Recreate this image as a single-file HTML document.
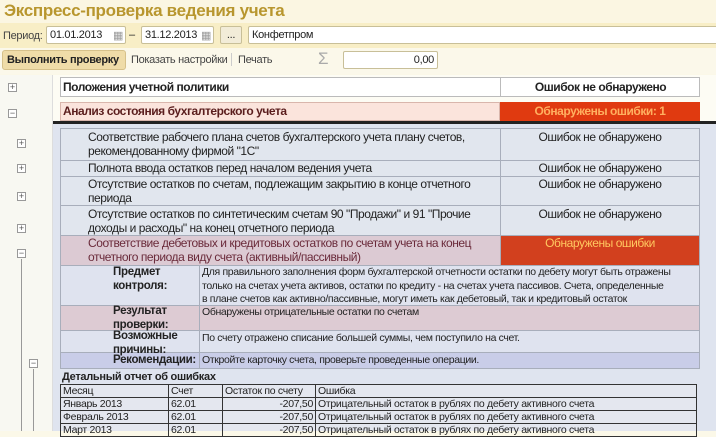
<!DOCTYPE html>
<html><head><meta charset="utf-8"><style>
*{margin:0;padding:0;box-sizing:border-box}
body{width:716px;height:431px;overflow:hidden;background:#fbf8e8;font-family:"Liberation Sans",Arial,sans-serif;position:relative;color:#222}
.a{position:absolute;white-space:nowrap}
.inp{position:absolute;background:#fff;border:1px solid #c8bf98;border-radius:2px;font-size:11px;padding:2px 3px;height:18px;white-space:nowrap;letter-spacing:-0.3px}
.t{font-size:12px;line-height:14px;letter-spacing:-0.45px}
.pl{position:absolute;width:9px;height:9px;border:1px solid #999;background:#fff;font-size:9px;line-height:7px;text-align:center;color:#555}
.box{position:absolute;border:1px solid #a8aebb}
.s{font-size:10.5px;line-height:13.5px;letter-spacing:-0.35px}
.lb{font-size:11.5px;line-height:13.5px;font-weight:bold;letter-spacing:-0.3px}
.c{position:absolute;border:1px solid #333;font-size:10.5px;line-height:12px;padding-left:2px;letter-spacing:-0.3px;white-space:nowrap;height:14px}
</style></head><body>
<div class="a" style="left:0;top:0;width:716px;height:23px;background:#fbf6e2"></div>
<div class="a" style="left:4px;top:1px;font-size:17px;font-weight:bold;color:#b8962e;letter-spacing:-0.3px">Экспресс-проверка ведения учета</div>
<div class="a" style="left:0;top:23px;width:716px;height:25px;background:#f8eec6"></div>
<div class="a" style="left:3px;top:30px;font-size:11px;color:#444;letter-spacing:-0.3px">Период:</div>
<div class="inp" style="left:46px;top:26px;width:80px">01.01.2013<span class="a" style="left:66px;top:2px;color:#999">▦</span></div>
<div class="a" style="left:129px;top:29px;font-size:11px">–</div>
<div class="inp" style="left:141px;top:26px;width:73px">31.12.2013<span class="a" style="left:59px;top:2px;color:#999">▦</span></div>
<div class="inp" style="left:220px;top:26px;width:22px;background:#f2ecd8;text-align:center;padding:2px 0">...</div>
<div class="inp" style="left:248px;top:26px;width:470px">Конфетпром</div>
<div class="a" style="left:0;top:48px;width:716px;height:26px;background:#fbf8ea"></div>
<div class="a" style="left:2px;top:50px;width:124px;height:20px;background:#efdca8;border:1px solid #d6c18a;border-radius:3px;font-size:11px;font-weight:bold;padding:3px 4px;letter-spacing:-0.3px">Выполнить проверку</div>
<div class="a" style="left:131px;top:54px;font-size:11px;color:#444;letter-spacing:-0.3px">Показать настройки</div>
<div class="a" style="left:231px;top:53px;width:1px;height:13px;background:#ccc"></div>
<div class="a" style="left:238px;top:54px;font-size:11px;color:#444;letter-spacing:-0.3px">Печать</div>
<div class="a" style="left:318px;top:49px;font-size:17px;color:#aaa">Σ</div>
<div class="inp" style="left:343px;top:51px;width:95px;text-align:right">0,00</div>
<div class="a" style="left:0;top:75px;width:53px;height:356px;background:#f8f8f2;border-right:1px solid #ddd"></div>
<div class="pl" style="left:8px;top:83px">+</div>
<div class="pl" style="left:8px;top:109px">−</div>
<div class="a" style="left:53px;top:75px;width:663px;height:46px;background:#fdfcf4"></div>
<div class="a" style="left:60px;top:77px;width:640px;height:20px;background:#fff;border:1px solid #bbb"></div>
<div class="a t" style="left:63px;top:80px;font-weight:bold">Положения учетной политики</div>
<div class="a t" style="left:500px;top:78px;height:18px;padding-top:2px;width:200px;text-align:center;font-weight:bold;border-left:1px solid #bbb">Ошибок не обнаружено</div>
<div class="a" style="left:60px;top:102px;width:440px;height:19px;background:#fbe4dc;border:1px solid #d9b6ac"></div>
<div class="a t" style="left:63px;top:104px;font-weight:bold;color:#5a1d1d">Анализ состояния бухгалтерского учета</div>
<div class="a t" style="left:500px;top:102px;width:200px;height:19px;background:#e03a10;color:#ffb060;font-weight:bold;text-align:center;padding-top:2px">Обнаружены ошибки: 1</div>
<div class="a" style="left:53px;top:121px;width:663px;height:3px;background:#222"></div>
<div class="a" style="left:53px;top:124px;width:663px;height:307px;background:#dfe4ef"></div>
<div class="pl" style="left:17px;top:139px">+</div>
<div class="pl" style="left:17px;top:164px">+</div>
<div class="pl" style="left:17px;top:192px">+</div>
<div class="pl" style="left:17px;top:224px">+</div>
<div class="pl" style="left:17px;top:249px">−</div>
<div class="a" style="left:21px;top:259px;width:1px;height:172px;background:#999"></div>
<div class="pl" style="left:29px;top:359px">−</div>
<div class="a" style="left:33px;top:369px;width:1px;height:62px;background:#999"></div>

<div class="box" style="left:60px;top:128px;width:441px;height:33px;background:#e1e6ee"></div>
<div class="box" style="left:500px;top:128px;width:200px;height:33px;background:#e1e6ee"></div>
<div class="box" style="left:60px;top:160px;width:441px;height:17px;background:#e1e6ee"></div>
<div class="box" style="left:500px;top:160px;width:200px;height:17px;background:#e1e6ee"></div>
<div class="box" style="left:60px;top:176px;width:441px;height:30px;background:#e1e6ee"></div>
<div class="box" style="left:500px;top:176px;width:200px;height:30px;background:#e1e6ee"></div>
<div class="box" style="left:60px;top:205px;width:441px;height:31px;background:#e1e6ee"></div>
<div class="box" style="left:500px;top:205px;width:200px;height:31px;background:#e1e6ee"></div>
<div class="box" style="left:60px;top:235px;width:441px;height:31px;background:#dccad3"></div>
<div class="box" style="left:500px;top:235px;width:200px;height:31px;background:#d2401e"></div>

<div class="a t" style="left:88px;top:130px">Соответствие рабочего плана счетов бухгалтерского учета плану счетов,<br>рекомендованному фирмой "1С"</div>
<div class="a t" style="left:88px;top:161px">Полнота ввода остатков перед началом ведения учета</div>
<div class="a t" style="left:88px;top:177px">Отсутствие остатков по счетам, подлежащим закрытию в конце отчетного<br>периода</div>
<div class="a t" style="left:88px;top:207px">Отсутствие остатков по синтетическим счетам 90 "Продажи" и 91 "Прочие<br>доходы и расходы" на конец отчетного периода</div>
<div class="a t" style="left:88px;top:236px;color:#6a2a3a">Соответствие дебетовых и кредитовых остатков по счетам учета на конец<br>отчетного периода виду счета (активный/пассивный)</div>
<div class="a t" style="left:500px;top:130px;width:200px;text-align:center">Ошибок не обнаружено</div>
<div class="a t" style="left:500px;top:161px;width:200px;text-align:center">Ошибок не обнаружено</div>
<div class="a t" style="left:500px;top:177px;width:200px;text-align:center">Ошибок не обнаружено</div>
<div class="a t" style="left:500px;top:207px;width:200px;text-align:center">Ошибок не обнаружено</div>
<div class="a t" style="left:500px;top:236px;width:200px;text-align:center;color:#ffc860">Обнаружены ошибки</div>

<div class="box" style="left:60px;top:265px;width:140px;height:41px;background:#dfe3ef"></div>
<div class="box" style="left:199px;top:265px;width:501px;height:41px;background:#dfe3ef"></div>
<div class="box" style="left:60px;top:305px;width:140px;height:26px;background:#ddcbd3"></div>
<div class="box" style="left:199px;top:305px;width:501px;height:26px;background:#ddcbd3"></div>
<div class="box" style="left:60px;top:330px;width:140px;height:23px;background:#dfe3ef"></div>
<div class="box" style="left:199px;top:330px;width:501px;height:23px;background:#dfe3ef"></div>
<div class="box" style="left:60px;top:352px;width:140px;height:17px;background:#c9cde8"></div>
<div class="box" style="left:199px;top:352px;width:501px;height:17px;background:#c9cde8"></div>
<div class="a lb" style="left:113px;top:266px">Предмет<br>контроля:</div>
<div class="a lb" style="left:113px;top:305px">Результат<br>проверки:</div>
<div class="a lb" style="left:113px;top:330px">Возможные<br>причины:</div>
<div class="a lb" style="left:113px;top:354px">Рекомендации:</div>
<div class="a s" style="left:202px;top:266px">Для правильного заполнения форм бухгалтерской отчетности остатки по дебету могут быть отражены<br>только на счетах учета активов, остатки по кредиту - на счетах учета пассивов. Счета, определенные<br>в плане счетов как активно/пассивные, могут иметь как дебетовый, так и кредитовый остаток</div>
<div class="a s" style="left:202px;top:306px">Обнаружены отрицательные остатки по счетам</div>
<div class="a s" style="left:202px;top:332px">По счету отражено списание большей суммы, чем поступило на счет.</div>
<div class="a s" style="left:202px;top:354px">Откройте карточку счета, проверьте проведенные операции.</div>

<div class="a" style="left:62px;top:371px;font-size:11px;font-weight:bold;letter-spacing:-0.3px">Детальный отчет об ошибках</div>
<div class="a" style="left:60px;top:384px;width:637px;height:47px;background:#e4e7ef"></div>
<div class="c" style="left:60px;top:384px;width:109px">Месяц</div>
<div class="c" style="left:168px;top:384px;width:55px">Счет</div>
<div class="c" style="left:222px;top:384px;width:94px">Остаток по счету</div>
<div class="c" style="left:315px;top:384px;width:382px">Ошибка</div>
<div class="c" style="left:60px;top:397px;width:109px">Январь 2013</div>
<div class="c" style="left:168px;top:397px;width:55px">62.01</div>
<div class="c" style="left:222px;top:397px;width:94px;text-align:right;padding-right:2px">-207,50</div>
<div class="c" style="left:315px;top:397px;width:382px">Отрицательный остаток в рублях по дебету активного счета</div>
<div class="c" style="left:60px;top:410px;width:109px">Февраль 2013</div>
<div class="c" style="left:168px;top:410px;width:55px">62.01</div>
<div class="c" style="left:222px;top:410px;width:94px;text-align:right;padding-right:2px">-207,50</div>
<div class="c" style="left:315px;top:410px;width:382px">Отрицательный остаток в рублях по дебету активного счета</div>
<div class="c" style="left:60px;top:423px;width:109px">Март 2013</div>
<div class="c" style="left:168px;top:423px;width:55px">62.01</div>
<div class="c" style="left:222px;top:423px;width:94px;text-align:right;padding-right:2px">-207,50</div>
<div class="c" style="left:315px;top:423px;width:382px">Отрицательный остаток в рублях по дебету активного счета</div>
</body></html>
